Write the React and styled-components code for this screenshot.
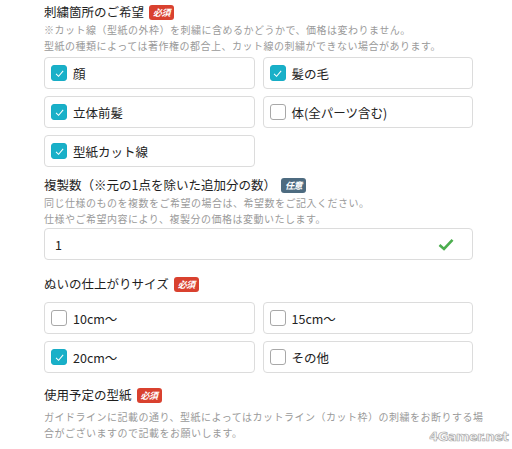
import React from "react";
import styled, { createGlobalStyle } from "styled-components";

const GlobalStyle = createGlobalStyle`
  body {
    margin: 0;
    background: #ffffff;
    font-family: "Noto Sans CJK JP", "Noto Sans", sans-serif;
    color: #222;
  }
`;

const Page = styled.div`
  position: relative;
  width: 512px;
  height: 449px;
  overflow: hidden;
  padding: 2px 0 0 44px;
  box-sizing: border-box;
`;

const Form = styled.div`
  width: 429px;
  display: flex;
  flex-direction: column;
`;

const Section = styled.section`
  display: flex;
  flex-direction: column;
  margin-top: ${(p) => p.$top || 0}px;
`;

const TitleRow = styled.div`
  display: flex;
  align-items: center;
  gap: 5px;
  height: 20px;
`;

const Title = styled.h2`
  margin: 0;
  font-size: 12.5px;
  font-weight: 400;
  line-height: 20px;
  color: #1e1e1e;
`;

const Badge = styled.span`
  display: inline-flex;
  align-items: center;
  justify-content: center;
  width: 25px;
  height: 15px;
  border-radius: 3px;
  background: ${(p) => (p.$optional ? "#4d6b80" : "#d9412f")};
  color: #fff;
  font-size: 9px;
  font-weight: 700;
  font-style: italic;
  letter-spacing: -0.5px;
`;

const Note = styled.p`
  margin: 0;
  margin-top: ${(p) => p.$top || 0}px;
  font-size: 10px;
  line-height: 16px;
  letter-spacing: 0.5px;
  color: #9a9a9a;
  white-space: nowrap;
`;

const Options = styled.div`
  display: grid;
  grid-template-columns: 1fr 1fr;
  column-gap: 8px;
  row-gap: ${(p) => p.$gap || 7}px;
  margin-top: ${(p) => p.$top || 0}px;
`;

const Option = styled.label`
  display: flex;
  align-items: center;
  gap: 6px;
  height: 32px;
  padding: 0 6px;
  box-sizing: border-box;
  border: 1px solid #dcdcdc;
  border-radius: 4px;
  background: #fff;
  font-size: 12.5px;
  color: #222;
`;

const Box = styled.span`
  display: inline-flex;
  align-items: center;
  justify-content: center;
  width: 16px;
  height: 16px;
  box-sizing: border-box;
  border-radius: 3px;
  border: 1px solid ${(p) => (p.$checked ? "#17adc6" : "#a8a8a8")};
  background: ${(p) => (p.$checked ? "#19b0c8" : "#fff")};
`;

const Input = styled.div`
  display: flex;
  align-items: center;
  justify-content: space-between;
  height: 32px;
  margin-top: 1px;
  padding: 0 18px 0 10px;
  box-sizing: border-box;
  border: 1px solid #dcdcdc;
  border-radius: 4px;
  font-size: 12.5px;
  color: #222;
`;

const Watermark = styled.div`
  position: absolute;
  right: 4px;
  bottom: 5px;
  font-family: "DejaVu Sans", sans-serif;
  font-size: 13px;
  font-weight: 700;
  letter-spacing: -0.6px;
  color: #f8f8f8;
  -webkit-text-stroke: 0.7px #a8a8a8;
`;

const Check = () => (
  <svg width="11" height="11" viewBox="0 0 12 12">
    <path d="M2.2 6.3 L5 9 L10 3.2" fill="none" stroke="#fff" strokeWidth="1.1" />
  </svg>
);

const CheckOption = ({ checked, children }) => (
  <Option>
    <Box $checked={checked}>{checked && <Check />}</Box>
    {children}
  </Option>
);

const App = () => (
  <>
    <GlobalStyle />
    <Page>
      <Form>
        <Section>
          <TitleRow>
            <Title>刺繍箇所のご希望</Title>
            <Badge>必須</Badge>
          </TitleRow>
          <Note>※カット線（型紙の外枠）を刺繍に含めるかどうかで、価格は変わりません。</Note>
          <Note>型紙の種類によっては著作権の都合上、カット線の刺繍ができない場合があります。</Note>
          <Options $top={3}>
            <CheckOption checked>顔</CheckOption>
            <CheckOption checked>髪の毛</CheckOption>
            <CheckOption checked>立体前髪</CheckOption>
            <CheckOption>体(全パーツ含む)</CheckOption>
            <CheckOption checked>型紙カット線</CheckOption>
          </Options>
        </Section>

        <Section $top={8}>
          <TitleRow>
            <Title>複製数（※元の1点を除いた追加分の数）</Title>
            <Badge $optional>任意</Badge>
          </TitleRow>
          <Note>同じ仕様のものを複数をご希望の場合は、希望数をご記入ください。</Note>
          <Note>仕様やご希望内容により、複製分の価格は変動いたします。</Note>
          <Input>
            <span>1</span>
            <svg width="16" height="13" viewBox="0 0 16 13">
              <path d="M1.5 7 L6 11 L14.5 1.8" fill="none" stroke="#4cae4f" strokeWidth="2.6" />
            </svg>
          </Input>
        </Section>

        <Section $top={14}>
          <TitleRow>
            <Title>ぬいの仕上がりサイズ</Title>
            <Badge>必須</Badge>
          </TitleRow>
          <Options $top={8} $gap={7}>
            <CheckOption>10cm～</CheckOption>
            <CheckOption>15cm～</CheckOption>
            <CheckOption checked>20cm～</CheckOption>
            <CheckOption>その他</CheckOption>
          </Options>
        </Section>

        <Section $top={12}>
          <TitleRow>
            <Title>使用予定の型紙</Title>
            <Badge>必須</Badge>
          </TitleRow>
          <Note $top={4}>
            ガイドラインに記載の通り、型紙によってはカットライン（カット枠）の刺繍をお断りする場
          </Note>
          <Note>合がございますので記載をお願いします。</Note>
        </Section>
      </Form>
      <Watermark>4Gamer.net</Watermark>
    </Page>
  </>
);

export default App;
